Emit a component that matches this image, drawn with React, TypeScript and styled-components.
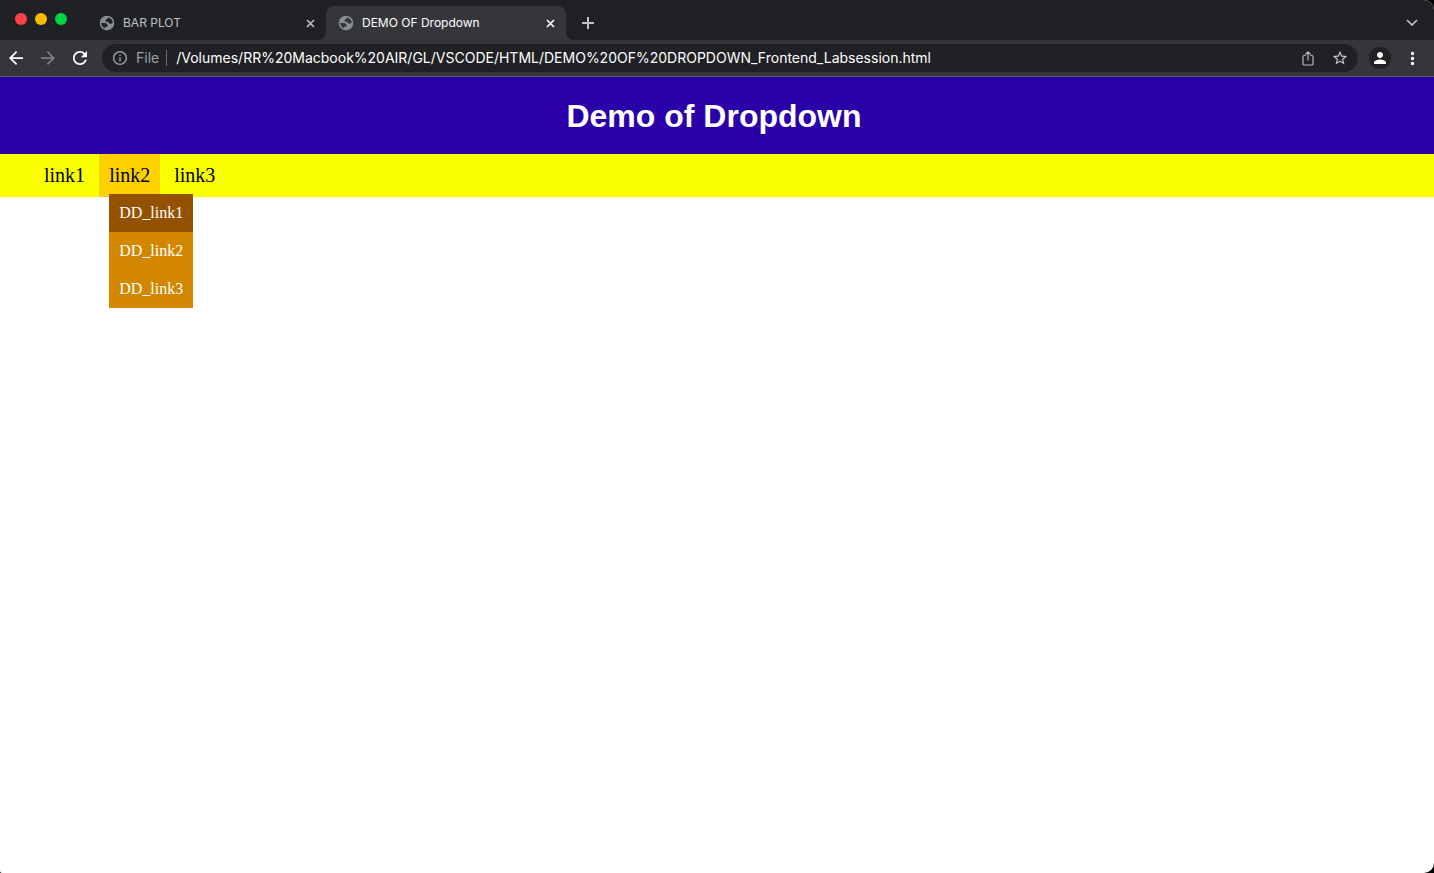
import React from "react";
import styled, { createGlobalStyle } from "styled-components";

const GlobalStyle = createGlobalStyle`
  *, *::before, *::after { box-sizing: border-box; }
  body { margin: 0; background: #000; }
  button { border: 0; padding: 0; margin: 0; background: none; font: inherit; color: inherit; cursor: pointer; }
`;

const uiFont = `Inter, Roboto, sans-serif`;

const Window = styled.div`
  display: flex;
  flex-direction: column;
  min-height: 100vh;
  overflow: hidden;
  border-radius: 0 10px 10px 2px;
  background: #fff;
`;

const TabStrip = styled.div`
  display: flex;
  align-items: flex-end;
  height: 40px;
  background: #202124;
  font-family: ${uiFont};
  font-size: 12px;
`;

const WindowControls = styled.div`
  display: flex;
  align-items: center;
  align-self: flex-start;
  gap: 8px;
  width: 86px;
  height: 38px;
  padding-left: 15px;
`;

const Light = styled.button<{ $color: string }>`
  width: 12px;
  height: 12px;
  border-radius: 50%;
  background: ${(p) => p.$color};
`;

const TabItem = styled.div<{ $active?: boolean }>`
  position: relative;
  display: flex;
  align-items: center;
  width: 240px;
  height: 34px;
  padding: 0 8px 0 12px;
  border-radius: 8px 8px 0 0;
  background: ${(p) => (p.$active ? "#35363a" : "transparent")};
  color: ${(p) => (p.$active ? "#fff" : "#bdc1c6")};

  &::before,
  &::after {
    content: "";
    display: ${(p) => (p.$active ? "block" : "none")};
    position: absolute;
    bottom: 0;
    width: 8px;
    height: 8px;
  }
  &::before {
    right: 100%;
    background: radial-gradient(circle at 0 0, transparent 8px, #35363a 8px);
  }
  &::after {
    left: 100%;
    background: radial-gradient(circle at 100% 0, transparent 8px, #35363a 8px);
  }
`;

const TabButton = styled.button<{ $inset?: boolean }>`
  display: flex;
  flex: 1;
  align-items: center;
  gap: 8px;
  height: 100%;
  padding-left: ${(p) => (p.$inset ? "1px" : "0")};
  line-height: 16px;
  white-space: nowrap;
`;

const SmallButton = styled.button`
  display: flex;
  align-items: center;
  justify-content: center;
  width: 16px;
  height: 16px;
`;

const NewTab = styled.button`
  display: flex;
  align-items: center;
  justify-content: center;
  width: 28px;
  height: 34px;
  margin-left: 8px;
  color: #bdc1c6;
`;

const TabSearch = styled(NewTab)`
  margin-left: auto;
  margin-right: 8px;
`;

const Toolbar = styled.div`
  display: flex;
  align-items: center;
  height: 37px;
  padding-right: 6px;
  border-bottom: 1px solid #5b5c60;
  background: #35363a;
  font-family: ${uiFont};
  font-size: 14px;
`;

const IconButton = styled.button<{ $color?: string }>`
  display: flex;
  flex: none;
  align-items: center;
  justify-content: center;
  width: 32px;
  height: 28px;
  color: ${(p) => p.$color || "#fff"};
`;

const AddressBar = styled.form`
  display: flex;
  flex: 1;
  align-items: center;
  height: 28px;
  margin: 0 6px;
  padding: 0 2px;
  border-radius: 14px;
  background: #202124;
`;

const Scheme = styled.label`
  padding-right: 7px;
  border-right: 1px solid #6b6e72;
  color: #9aa0a6;
  line-height: 16px;
`;

const AddressInput = styled.input`
  flex: 1;
  min-width: 0;
  height: 24px;
  padding: 0 0 2px 9px;
  border: 0;
  outline: 0;
  background: transparent;
  color: #fff;
  font: inherit;
`;

const Avatar = styled.span`
  display: flex;
  align-items: center;
  justify-content: center;
  width: 22px;
  height: 22px;
  border-radius: 50%;
  background: #202124;
`;

const Header = styled.header`
  padding: 21px 6px 19px 0;
  background: #2a00a8;
  color: #fff;
  text-align: center;
`;

const Title = styled.h1`
  margin: 0;
  font: bold 32px/37px "Liberation Sans", Arial, sans-serif;
`;

const NavBar = styled.nav`
  background: #faff00;
  font-family: "Liberation Serif", "Times New Roman", serif;
`;

const NavList = styled.ul`
  display: flex;
  gap: 4px;
  margin: 0;
  padding: 0 0 0 34px;
  list-style: none;
`;

const NavItem = styled.li<{ $open?: boolean }>`
  position: relative;
  padding: 10px;
  background: ${(p) => (p.$open ? "#ffd000" : "transparent")};
`;

const NavLink = styled.a`
  display: block;
  color: #000;
  font-size: 20px;
  line-height: 23px;
  text-decoration: none;
`;

const Dropdown = styled.ul`
  position: absolute;
  top: 40px;
  left: 10px;
  margin: 0;
  padding: 0;
  list-style: none;
`;

const DropdownLink = styled.a<{ $hovered?: boolean }>`
  display: block;
  padding: 10px;
  background: ${(p) => (p.$hovered ? "#945200" : "#d38700")};
  color: #fff;
  font-size: 16px;
  line-height: 18px;
  text-decoration: none;
  white-space: nowrap;
`;

type IconProps = { d: string; size: number; box?: string; color?: string };

const Icon = ({ d, size, box = "0 0 24 24", color = "currentColor" }: IconProps) => (
  <svg width={size} height={size} viewBox={box} fill={color} fillRule="evenodd" aria-hidden="true">
    <path d={d} />
  </svg>
);

const LineIcon = ({ d, size, width }: { d: string; size: number; width: number }) => (
  <svg width={size} height={size} viewBox={`0 0 ${size} ${size}`} fill="none" stroke="currentColor" strokeWidth={width} aria-hidden="true">
    <path d={d} />
  </svg>
);

const globe =
  "M12 2a10 10 0 1 0 0 20 10 10 0 1 0 0-20zM12 4a8 8 0 1 1 0 16 8 8 0 1 1 0-16zM4 12h4.400c3.407.022 4.922 1.730 4.543 5.127H9.488v2.470a8.004 8.004 0 0 0 10.498-8.083C19.327 12.504 18.332 13 17 13c-2.137 0-3.206-.916-3.206-2.750h-3.748c-.274-2.728.683-4.092 2.870-4.092 0-.975.327-1.597.811-1.970A8.004 8.004 0 0 0 4 12z";
const back = "M20 11H7.83l5.59-5.59L12 4l-8 8 8 8 1.41-1.41L7.83 13H20v-2z";
const forward = "M12 4l-1.41 1.41L16.17 11H4v2h12.17l-5.58 5.59L12 20l8-8z";
const reload =
  "M17.65 6.35C16.2 4.9 14.21 4 12 4c-4.42 0-7.99 3.58-7.99 8s3.57 8 7.99 8c3.73 0 6.84-2.55 7.73-6h-2.08c-.82 2.33-3.04 4-5.65 4-3.31 0-6-2.69-6-6s2.69-6 6-6c1.66 0 3.14.69 4.22 1.78L13 11h7V4l-2.35 2.35z";
const info =
  "M11 7h2v2h-2zm0 4h2v6h-2zm1-9C6.48 2 2 6.48 2 12s4.48 10 10 10 10-4.48 10-10S17.52 2 12 2zm0 18c-4.410 0-8-3.590-8-8s3.590-8 8-8 8 3.590 8 8-3.590 8-8 8z";
const star =
  "M22 9.24l-7.190-.62L12 2 9.190 8.630 2 9.240l5.460 4.730L5.820 21 12 17.270 18.180 21l-1.630-7.030L22 9.240zM12 15.400l-3.760 2.270 1-4.280-3.320-2.880 4.380-.38L12 6.100l1.710 4.040 4.380.38-3.320 2.880 1 4.280L12 15.400z";
const person = "M12 12c2.210 0 4-1.790 4-4s-1.790-4-4-4-4 1.790-4 4 1.790 4 4 4zm0 2c-2.670 0-8 1.340-8 4v2h16v-2c0-2.660-5.330-4-8-4z";
const cross = "M1 1l7 7M8 1L1 8";

const Tab = ({ title, active }: { title: string; active?: boolean }) => (
  <TabItem $active={active}>
    <TabButton $inset={!active} role="tab" aria-selected={!!active}>
      <Icon d={globe} size={16} box="1 1 22 22" color="#8b9298" />
      {title}
    </TabButton>
    <SmallButton aria-label={`Close ${title}`}>
      <LineIcon d={cross} size={9} width={1.6} />
    </SmallButton>
  </TabItem>
);

const dropdownLinks = ["DD_link1", "DD_link2", "DD_link3"];

export default function App() {
  return (
    <Window>
      <GlobalStyle />
      <TabStrip>
        <WindowControls>
          <Light $color="#ff4245" aria-label="Close window" />
          <Light $color="#ffb900" aria-label="Minimize window" />
          <Light $color="#00d544" aria-label="Zoom window" />
        </WindowControls>
        <Tab title="BAR PLOT" />
        <Tab title="DEMO OF Dropdown" active />
        <NewTab aria-label="New tab">
          <LineIcon d="M6 0v12M0 6h12" size={12} width={2} />
        </NewTab>
        <TabSearch aria-label="Search tabs">
          <LineIcon d="M1 3l5 5 5-5" size={12} width={1.7} />
        </TabSearch>
      </TabStrip>
      <Toolbar>
        <IconButton aria-label="Back">
          <Icon d={back} size={14} box="4 4 16 16" />
        </IconButton>
        <IconButton aria-label="Forward" $color="#7c7d80">
          <Icon d={forward} size={14} box="4 4 16 16" />
        </IconButton>
        <IconButton aria-label="Reload">
          <Icon d={reload} size={14} box="4 4 16 16" />
        </IconButton>
        <AddressBar onSubmit={(e: React.FormEvent) => e.preventDefault()}>
          <IconButton type="button" aria-label="View site information" $color="#9aa0a6">
            <Icon d={info} size={14} box="2 2 20 20" />
          </IconButton>
          <Scheme htmlFor="address">File</Scheme>
          <AddressInput
            id="address"
            defaultValue="/Volumes/RR%20Macbook%20AIR/GL/VSCODE/HTML/DEMO%20OF%20DROPDOWN_Frontend_Labsession.html"
          />
          <IconButton type="button" aria-label="Share" $color="#b4b6b9">
            <LineIcon
              d="M5.500 5.500H4a1 1 0 0 0-1 1v7.500a1 1 0 0 0 1 1h8a1 1 0 0 0 1-1V6.500a1 1 0 0 0-1-1h-1.500M8 10.500V2M5.300 4.500L8 1.800l2.700 2.700"
              size={16}
              width={1.2}
            />
          </IconButton>
          <IconButton type="button" aria-label="Bookmark" $color="#c4c7ca">
            <Icon d={star} size={16} box="1 1 22 22" />
          </IconButton>
        </AddressBar>
        <IconButton aria-label="Profile">
          <Avatar>
            <Icon d={person} size={12} box="4 4 16 16" />
          </Avatar>
        </IconButton>
        <IconButton aria-label="Menu">
          <Icon
            d="M8.500 1.800a1.700 1.700 0 1 0 0 3.400 1.700 1.700 0 1 0 0-3.400zM8.500 6.800a1.700 1.700 0 1 0 0 3.400 1.700 1.700 0 1 0 0-3.400zM8.500 11.800a1.700 1.700 0 1 0 0 3.400 1.700 1.700 0 1 0 0-3.400z"
            size={16}
            box="0 0 16 16"
          />
        </IconButton>
      </Toolbar>
      <Header>
        <Title>Demo of Dropdown</Title>
      </Header>
      <NavBar>
        <NavList>
          <NavItem>
            <NavLink href="#link1">link1</NavLink>
          </NavItem>
          <NavItem $open>
            <NavLink href="#link2">link2</NavLink>
            <Dropdown>
              {dropdownLinks.map((name, i) => (
                <li key={name}>
                  <DropdownLink href={`#${name}`} $hovered={i === 0}>
                    {name}
                  </DropdownLink>
                </li>
              ))}
            </Dropdown>
          </NavItem>
          <NavItem>
            <NavLink href="#link3">link3</NavLink>
          </NavItem>
        </NavList>
      </NavBar>
    </Window>
  );
}
